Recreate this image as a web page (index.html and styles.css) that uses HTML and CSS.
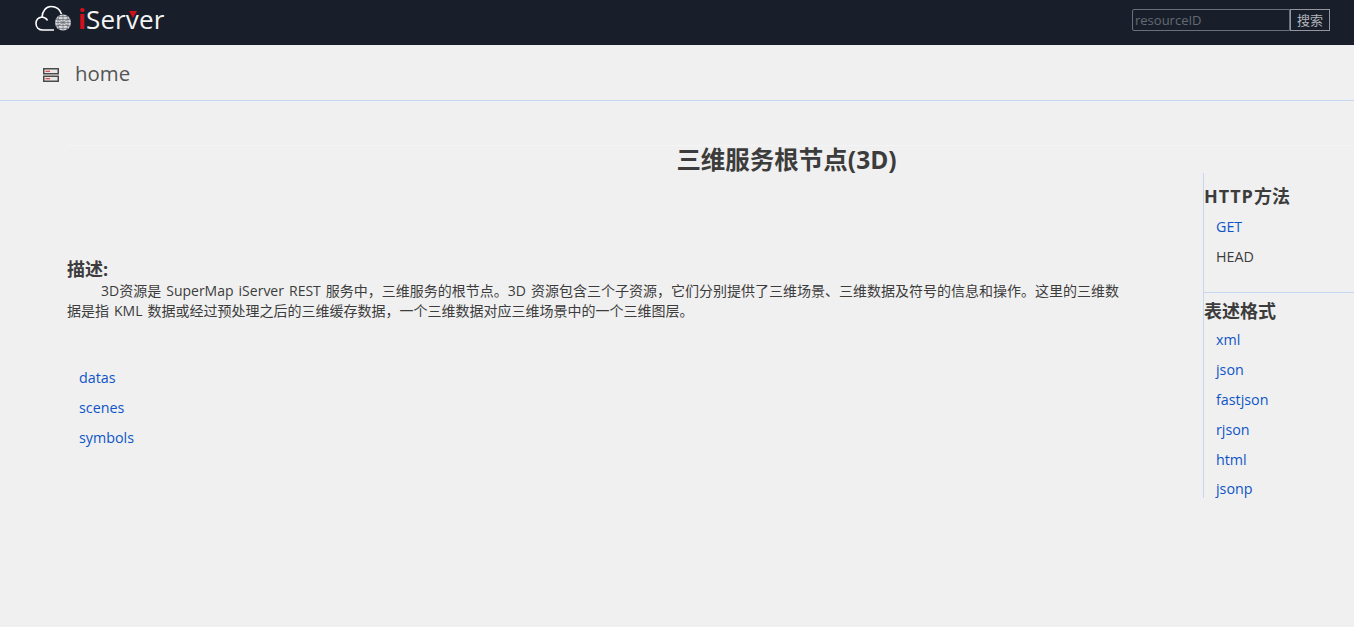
FILE: index.html
```html
<!DOCTYPE html>
<html>
<head>
    <title>三维服务根节点(3D)</title>
    <meta charset="UTF-8">
    <link rel="stylesheet" href="styles.css">
</head>
<body>
    <div class="topbar">
        <div class="logo">
            <svg class="logo-mark" width="44" height="34" viewBox="0 0 44 34">
                <path d="M20 30H9C4.500 30 2 27 2 23.500C2 20 4.500 17.500 8 17C8.500 11 12 6.500 17 6.500C22 6.500 26 9.500 27.500 14M8 17C10.500 17.200 12.500 18.500 13.500 20.500" fill="none" stroke="#fff" stroke-width="1.600"/>
                <circle cx="29" cy="22.500" r="8" fill="#d4d6d8"/>
                <path d="M21 22.500H37M22 19.500H36M22 25.500H36M24 16.500H34M24 28.500H34M29 14.500V30.500M25.500 15C23.500 20 23.500 25 25.500 30M32.500 15C34.500 20 34.500 25 32.500 30M22 18L36 27M22 27L36 18" fill="none" stroke="#5a5f68" stroke-width="0.600"/>
            </svg>
            <span class="logo-text"><span class="logo-i">i</span>Ser<span class="logo-v">v</span>er</span>
        </div>
        <div class="search">
            <input class="search-input" type="text" placeholder="resourceID">
            <button class="search-button">搜索</button>
        </div>
    </div>

    <div class="crumb">
        <svg class="crumb-icon" width="16" height="14" viewBox="0 0 16 14">
            <rect x="0.750" y="0.750" width="14.500" height="5" fill="#e8e8e8" stroke="#4a4a4a" stroke-width="1.500"/>
            <rect x="0.750" y="8.250" width="14.500" height="5" fill="#e8e8e8" stroke="#4a4a4a" stroke-width="1.500"/>
            <path d="M2.500 3.250H7M2.500 10.750H7" stroke="#d8202c"/>
        </svg>
        <span class="crumb-text">home</span>
    </div>

    <div class="main">
        <h1 class="title">三维服务根节点(3D)</h1>
        <div class="columns">
            <div class="content">
                <h3 class="desc-title">描述:</h3>
                <p class="desc">3D资源是 SuperMap iServer REST 服务中，三维服务的根节点。3D 资源包含三个子资源，它们分别提供了三维场景、三维数据及符号的信息和操作。这里的三维数据是指 KML 数据或经过预处理之后的三维缓存数据，一个三维数据对应三维场景中的一个三维图层。</p>
                <ul class="links">
                    <li><a href="#">datas</a></li>
                    <li><a href="#">scenes</a></li>
                    <li><a href="#">symbols</a></li>
                </ul>
            </div>
            <div class="side">
                <div class="side-group">
                    <h3 class="side-title"><span class="side-latin">HTTP</span>方法</h3>
                    <ul class="side-list">
                        <li><a href="#">GET</a></li>
                        <li>HEAD</li>
                    </ul>
                </div>
                <div class="side-group side-formats">
                    <h3 class="side-title">表述格式</h3>
                    <ul class="side-list">
                        <li><a href="#">xml</a></li>
                        <li><a href="#">json</a></li>
                        <li><a href="#">fastjson</a></li>
                        <li><a href="#">rjson</a></li>
                        <li><a href="#">html</a></li>
                        <li class="side-last"><a href="#">jsonp</a></li>
                    </ul>
                </div>
            </div>
        </div>
    </div>
</body>
</html>
```

FILE: styles.css
```css
* {
    box-sizing: border-box;
}

body {
    margin: 0;
    background-color: #f0f0f0;
    color: #3c3c3c;
    font-family: "Open Sans", "Noto Sans", "Noto Sans CJK SC", sans-serif;
    font-size: 14px;
}

a {
    color: #0f55c8;
    text-decoration: none;
}

ul {
    list-style: none;
    margin: 0;
    padding: 0;
}

/* top bar */
.topbar {
    height: 45px;
    background-color: #181f2b;
    display: flex;
    justify-content: space-between;
    align-items: flex-start;
    padding: 0 24px 0 34px;
}

.logo {
    display: flex;
    align-items: flex-start;
}

.logo-text {
    color: #f4f4f4;
    font-size: 26px;
    line-height: 38px;
    letter-spacing: 0.1px;
}

.logo-i {
    color: #d0101c;
    font-weight: 700;
}

.logo-v {
    position: relative;
}

.logo-v::before {
    content: "";
    position: absolute;
    top: 10px;
    left: 3px;
    border-left: 4px solid transparent;
    border-right: 4px solid transparent;
    border-top: 7px solid #d0101c;
}

.search {
    display: flex;
    margin-top: 9px;
}

.search-input {
    width: 158px;
    height: 22px;
    padding: 0 2px;
    border: 1px solid #6b6f78;
    border-radius: 2px 0 0 2px;
    background-color: transparent;
    color: #ccc;
    font-family: inherit;
    font-size: 13px;
}

.search-input::placeholder {
    color: #666a72;
}

.search-button {
    width: 40px;
    height: 22px;
    padding: 0 0 2px;
    border: 1px solid #93969c;
    background-color: transparent;
    color: #b0b3b8;
    font-family: inherit;
    font-size: 13px;
}

/* home line */
.crumb {
    height: 56px;
    display: flex;
    align-items: center;
    padding-left: 43px;
    border-bottom: 1px solid #c5d8f0;
}

.crumb-icon {
    margin: 4px 16px 0 0;
}

.crumb-text {
    font-size: 20.4px;
    color: #555;
}

/* page body */
.main {
    padding: 44px 0 0 67px;
}

.title {
    margin: 0;
    padding-left: 152px;
    height: 28px;
    border-top: 1px solid #f4f4f7;
    text-align: center;
    font-size: 24.5px;
    line-height: 28px;
    color: #3c3c3c;
}

.columns {
    display: flex;
    justify-content: space-between;
}

.content {
    width: 1056px;
    padding-top: 84px;
}

.desc-title {
    margin: 0;
    font-size: 18px;
    line-height: 24px;
}

.desc {
    margin: 0;
    font-size: 14px;
    line-height: 20px;
    text-indent: 34px;
    word-spacing: 1.4px;
}

.links {
    margin-top: 42px;
    padding-left: 12px;
    font-size: 14.3px;
}

.links li {
    line-height: 30px;
}

.side {
    width: 151px;
    height: 325px;
    border-left: 1px solid #c5d8f0;
}

.side-group {
    padding-top: 11px;
}

.side-formats {
    margin-top: 20px;
    padding-top: 6px;
    border-top: 1px solid #c5d8f0;
}

.side-title {
    margin: 0;
    font-size: 18px;
    line-height: 24px;
}

.side-latin {
    letter-spacing: 1px;
}

.side-list {
    margin-top: 4px;
    padding-left: 12px;
    font-size: 14.3px;
}

.side-formats .side-list {
    margin-top: 2px;
}

.side-list li {
    line-height: 30px;
}

.side-list .side-last {
    line-height: 28px;
}
```
